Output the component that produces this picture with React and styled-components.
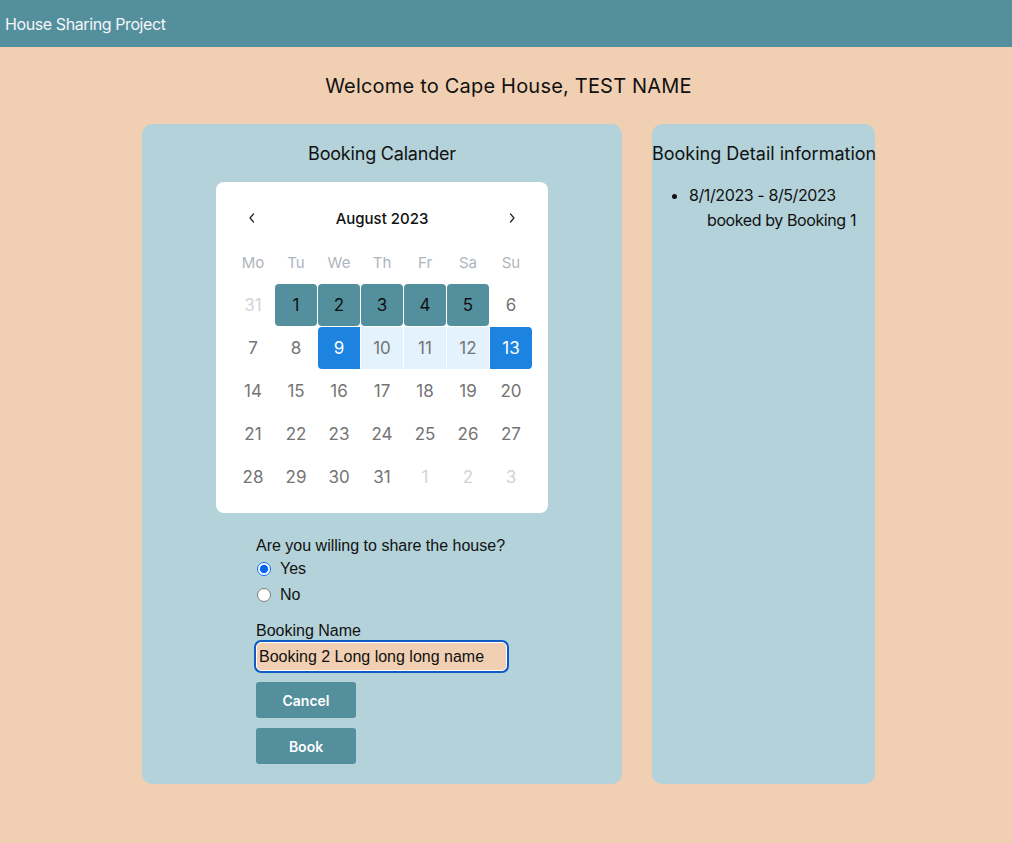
import React, { useState } from 'react';
import styled, { createGlobalStyle } from 'styled-components';

const GlobalStyle = createGlobalStyle`
  html, body {
    margin: 0;
    padding: 0;
    background: #f0cfb2;
    font-family: Inter, "Liberation Sans", sans-serif;
    color: #111;
  }
`;

const Page = styled.div`
  min-height: 843px;
  background: #f0cfb2;
`;

const TopBar = styled.header`
  height: 47px;
  background: #548f9e;
  display: flex;
  align-items: center;
  padding-left: 5px;
  color: #f4f7f8;
  font-size: 16px;
  letter-spacing: -0.4px;
`;

const Welcome = styled.h1`
  margin: 27px 0 26px;
  padding-left: 5px;
  text-align: center;
  font-size: 20px;
  font-weight: 400;
  line-height: 24px;
  letter-spacing: 0.2px;
`;

const Panels = styled.main`
  display: flex;
  justify-content: center;
  align-items: stretch;
  gap: 30px;
  padding-left: 5px;
`;

const Panel = styled.section`
  width: ${p => p.width}px;
  height: 660px;
  box-sizing: border-box;
  background: #b3d2d9;
  border-radius: 10px;
  display: flex;
  flex-direction: column;
  align-items: ${p => (p.centered ? 'center' : 'stretch')};
`;

const PanelTitle = styled.h2`
  margin: 19px 0 0;
  font-size: 18px;
  font-weight: 400;
  line-height: 22px;
  white-space: nowrap;
  letter-spacing: ${p => p.spacing || 0}px;
`;

const Calendar = styled.div`
  margin-top: 17px;
  width: 332px;
  box-sizing: border-box;
  padding: 16px 16px 15px;
  background: #fff;
  border-radius: 8px;
`;

const CalHeader = styled.div`
  height: 40px;
  display: flex;
  align-items: center;
  justify-content: space-between;
`;

const NavButton = styled.button`
  width: 40px;
  height: 40px;
  border: none;
  background: transparent;
  display: flex;
  align-items: center;
  justify-content: center;
  padding: 0;
  color: #222;
`;

const MonthLabel = styled.div`
  font-size: 15px;
  font-weight: 500;
  color: #111;
`;

const Grid = styled.div`
  display: grid;
  grid-template-columns: repeat(7, 42px);
  column-gap: 1px;
  row-gap: ${p => p.rowGap}px;
  margin-top: ${p => p.top}px;
`;

const Weekday = styled.div`
  height: 32px;
  display: flex;
  align-items: center;
  justify-content: center;
  font-size: 15px;
  color: #adb5bd;
`;

const dayBg = {
  booked: '#548f9e',
  edge: '#1c83e1',
  range: '#e3f2fd',
};

const dayColor = {
  booked: '#111',
  edge: '#fff',
  range: '#747474',
  outside: '#ced4da',
  normal: '#747474',
};

const Day = styled.div`
  height: 42px;
  display: flex;
  align-items: center;
  justify-content: center;
  font-size: 17px;
  background: ${p => dayBg[p.kind] || 'transparent'};
  color: ${p => dayColor[p.kind]};
  border-radius: ${p => p.radius};
`;

const Form = styled.form`
  margin-top: 23px;
  width: 252px;
  font-family: "Liberation Sans", Arial, sans-serif;
  font-size: 16px;
`;

const Question = styled.div`
  line-height: 20px;
`;

const RadioRow = styled.label`
  display: flex;
  align-items: center;
  height: 26px;
  gap: 9px;
  margin-left: 1px;

  input {
    margin: 0;
    width: 14px;
    height: 14px;
    accent-color: #0a64f0;
  }
`;

const FieldLabel = styled.div`
  margin-top: 13px;
  line-height: 19px;
`;

const NameInput = styled.input`
  display: block;
  width: 251px;
  height: 29px;
  box-sizing: border-box;
  margin-top: 2px;
  padding: 0 2px;
  font: inherit;
  font-size: 16px;
  color: #111;
  background: #f0cfb2;
  border: 1px solid #fff;
  border-radius: 5px;
  box-shadow: 0 0 0 2px #0d5bc6;
  outline: none;
`;

const ActionButton = styled.button`
  display: block;
  width: 100px;
  height: 36px;
  margin-top: ${p => p.top}px;
  border: none;
  border-radius: 3px;
  background: #548f9e;
  color: #fff;
  font-family: Inter, "Liberation Sans", sans-serif;
  font-size: 14px;
  font-weight: 600;
`;

const DetailList = styled.ul`
  margin: 18px 0 0;
  padding-left: 37px;
  font-size: 16px;
  line-height: 25px;
  letter-spacing: -0.4px;
`;

const Booker = styled.div`
  padding-left: 18px;
`;

const Chevron = ({ dir }) => (
  <svg width="12" height="14" viewBox="0 0 12 14" fill="none" stroke="currentColor" strokeWidth="1.2" strokeLinecap="round" strokeLinejoin="round">
    {dir === 'left' ? <path d="M7.5 3 4 7l3.5 4" /> : <path d="M4.5 3 8 7l-3.5 4" />}
  </svg>
);

const weekdays = ['Mo', 'Tu', 'We', 'Th', 'Fr', 'Sa', 'Su'];

const buildDays = () => {
  const days = [{ n: 31, outside: true }];
  for (let i = 1; i <= 31; i++) days.push({ n: i });
  [1, 2, 3].forEach(n => days.push({ n, outside: true }));
  return days;
};

const dayKind = d => {
  if (d.outside) return 'outside';
  if (d.n >= 1 && d.n <= 5) return 'booked';
  if (d.n === 9 || d.n === 13) return 'edge';
  if (d.n > 9 && d.n < 13) return 'range';
  return 'normal';
};

const dayRadius = d => {
  if (d.outside) return '0';
  if (d.n >= 1 && d.n <= 5) return '4px';
  if (d.n === 9) return '4px 0 0 4px';
  if (d.n === 13) return '0 4px 4px 0';
  return '0';
};

export default function App() {
  const [share, setShare] = useState('yes');
  const [name, setName] = useState('Booking 2 Long long long name');

  return (
    <Page>
      <GlobalStyle />
      <TopBar>House Sharing Project</TopBar>
      <Welcome>Welcome to Cape House, TEST NAME</Welcome>
      <Panels>
        <Panel width={480} centered>
          <PanelTitle spacing={-0.2}>Booking Calander</PanelTitle>
          <Calendar>
            <CalHeader>
              <NavButton aria-label="previous"><Chevron dir="left" /></NavButton>
              <MonthLabel>August 2023</MonthLabel>
              <NavButton aria-label="next"><Chevron dir="right" /></NavButton>
            </CalHeader>
            <Grid rowGap={0} top={8}>
              {weekdays.map(w => <Weekday key={w}>{w}</Weekday>)}
            </Grid>
            <Grid rowGap={1} top={6}>
              {buildDays().map((d, i) => (
                <Day key={i} kind={dayKind(d)} radius={dayRadius(d)}>{d.n}</Day>
              ))}
            </Grid>
          </Calendar>
          <Form onSubmit={e => e.preventDefault()}>
            <Question>Are you willing to share the house?</Question>
            <RadioRow>
              <input type="radio" name="share" checked={share === 'yes'} onChange={() => setShare('yes')} />
              Yes
            </RadioRow>
            <RadioRow>
              <input type="radio" name="share" checked={share === 'no'} onChange={() => setShare('no')} />
              No
            </RadioRow>
            <FieldLabel>Booking Name</FieldLabel>
            <NameInput value={name} onChange={e => setName(e.target.value)} />
            <ActionButton type="button" top={11}>Cancel</ActionButton>
            <ActionButton type="submit" top={10}>Book</ActionButton>
          </Form>
        </Panel>
        <Panel width={223}>
          <PanelTitle>Booking Detail information</PanelTitle>
          <DetailList>
            <li>
              8/1/2023 - 8/5/2023
              <Booker>booked by Booking 1</Booker>
            </li>
          </DetailList>
        </Panel>
      </Panels>
    </Page>
  );
}
